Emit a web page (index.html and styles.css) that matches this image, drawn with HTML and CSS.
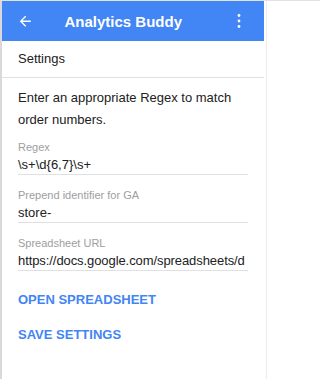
FILE: index.html
```html
<!DOCTYPE html>
<html>
<head>
<meta charset="utf-8">
<link rel="stylesheet" href="styles.css">
</head>
<body>
<div class="shell">
  <div class="app">
    <header class="topbar">
      <svg class="back" viewBox="0 0 24 24" width="16.5" height="16.5"><path fill="#fff" d="M20 11H7.83l5.59-5.59L12 4l-8 8 8 8 1.41-1.41L7.83 13H20v-2z"/></svg>
      <div class="title">Analytics Buddy</div>
      <svg class="more" viewBox="0 0 12 22" width="12" height="22"><circle cx="6" cy="5.5" r="1.4" fill="#fff"/><circle cx="6" cy="11" r="1.4" fill="#fff"/><circle cx="6" cy="16.5" r="1.4" fill="#fff"/></svg>
    </header>
    <div class="section-title">Settings</div>
    <div class="content">
      <p class="intro">Enter an appropriate Regex to match order numbers.</p>
      <div class="field">
        <div class="label">Regex</div>
        <div class="value">\s+\d{6,7}\s+</div>
      </div>
      <div class="field">
        <div class="label">Prepend identifier for GA</div>
        <div class="value">store-</div>
      </div>
      <div class="field">
        <div class="label">Spreadsheet URL</div>
        <div class="value url">https://docs.google.com/spreadsheets/d</div>
      </div>
      <div class="actions">
        <div class="btn">OPEN SPREADSHEET</div>
        <div class="btn">SAVE SETTINGS</div>
      </div>
    </div>
  </div>
  <div class="edge"></div>
</div>
</body>
</html>
```
FILE: styles.css
```css
html, body {
  margin: 0;
  padding: 0;
  background: #fff;
}
body {
  font-family: "Liberation Sans", Arial, Helvetica, sans-serif;
  color: #212121;
}
.shell {
  display: flex;
  height: 379px;
  border-top: 1px solid #e2e2e2;
  box-sizing: border-box;
}
.app {
  width: 262px;
  border-left: 2px solid #d9d9d9;
  background: #fff;
}
.edge {
  width: 1px;
  margin-left: 2px;
  background: #ececec;
}
.topbar {
  height: 40px;
  background: #4285f4;
  display: flex;
  align-items: center;
  padding: 0 19px 0 15px;
}
.back {
  display: block;
  flex: none;
}
.title {
  flex: 1;
  margin-left: 31px;
  color: #fff;
  font-weight: bold;
  font-size: 15px;
}
.more {
  display: block;
  flex: none;
}
.section-title {
  height: 36px;
  line-height: 36px;
  padding-left: 16px;
  font-size: 13px;
  border-bottom: 1px solid #e0e0e0;
}
.content {
  padding: 9px 16px 0 16px;
}
.intro {
  margin: 0;
  font-size: 13px;
  line-height: 22px;
}
.field {
  margin-top: 9px;
}
.field + .field {
  margin-top: 13px;
}
.label {
  font-size: 11px;
  line-height: 15px;
  color: #9e9e9e;
}
.value {
  font-size: 13px;
  line-height: 19px;
  border-bottom: 1px solid #e0e0e0;
  white-space: nowrap;
}
.url {
  letter-spacing: -0.08px;
}
.actions {
  margin-top: 19px;
  display: flex;
  flex-direction: column;
  gap: 15px;
}
.btn {
  font-size: 13px;
  line-height: 20px;
  font-weight: bold;
  color: #4285f4;
}
```
